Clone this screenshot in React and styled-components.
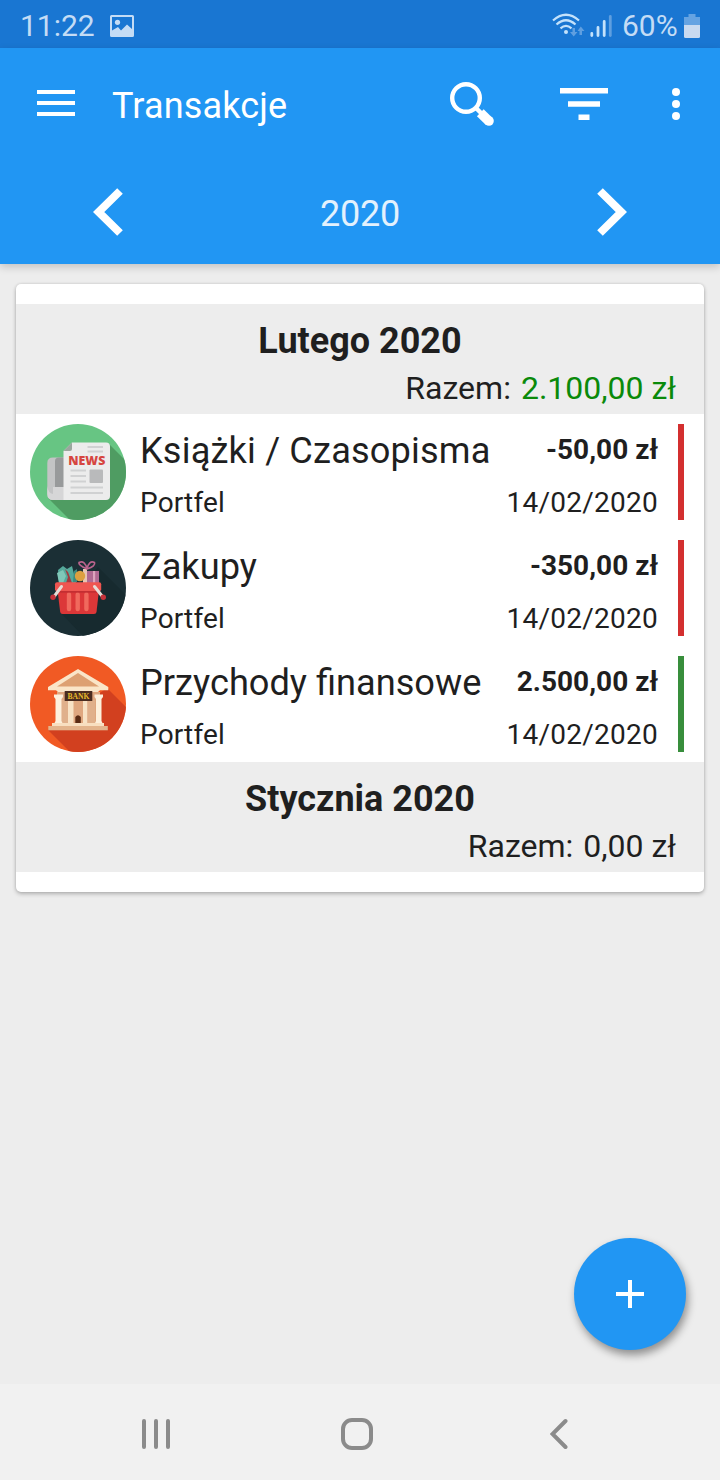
import React from 'react';
import styled, { createGlobalStyle } from 'styled-components';

const GlobalStyle = createGlobalStyle`
  * {
    box-sizing: border-box;
  }
  body {
    margin: 0;
    background: #ededed;
    font-family: Roboto, "Liberation Sans", sans-serif;
    color: #1f1f1f;
  }
  svg {
    display: block;
    flex: none;
  }
`;

const Screen = styled.div`
  width: 720px;
  height: 1480px;
  display: flex;
  flex-direction: column;
  background: #ededed;
  overflow: hidden;
`;

const StatusBar = styled.div`
  height: 48px;
  flex: none;
  padding: 3px 20px 0 20px;
  display: flex;
  align-items: center;
  background: #1976d2;
  color: #c4dcf5;
  font-size: 30px;
`;

const Clock = styled.span`
  width: 90px;
`;

const StatusIcons = styled.div`
  margin-left: auto;
  display: flex;
  align-items: center;
`;

const Percent = styled.span`
  width: 62px;
  white-space: nowrap;
`;

const Header = styled.header`
  height: 216px;
  flex: none;
  background: #2196f3;
  color: #fff;
  box-shadow: 0 3px 8px rgba(0, 0, 0, 0.18);
`;

const Toolbar = styled.div`
  height: 112px;
  display: flex;
  align-items: center;
  padding: 0 40px 0 37px;
`;

const MenuIcon = styled.svg`
  margin-bottom: 2px;
`;

const ActionIcon = styled.svg`
  margin-left: 64px;
`;

const Title = styled.h1`
  flex: 1;
  margin: 3px 0 0 37px;
  font-size: 36px;
  font-weight: 400;
  line-height: 42px;
  letter-spacing: 0.15px;
`;

const YearBar = styled.div`
  height: 104px;
  display: flex;
  align-items: center;
  justify-content: space-between;
  padding: 0 93px;
`;

const Year = styled.span`
  font-size: 36px;
  line-height: 42px;
  margin-top: 3px;
  letter-spacing: -0.2px;
  color: #e3f1fd;
`;

const Content = styled.main`
  flex: 1;
  padding: 20px 16px;
`;

const Card = styled.section`
  padding: 20px 0;
  background: #fff;
  border-radius: 5px;
  box-shadow: 0 2px 4px rgba(0, 0, 0, 0.24), 0 0 3px rgba(0, 0, 0, 0.12);
`;

const MonthHeader = styled.div`
  height: 110px;
  padding: 16px 28px 0;
  background: #ededed;
`;

const Month = styled.h2`
  margin: 0;
  font-size: 36px;
  font-weight: 700;
  line-height: 42px;
  text-align: center;
`;

const Total = styled.div`
  display: flex;
  justify-content: flex-end;
  gap: 10px;
  margin-top: 7px;
  font-size: 32px;
  line-height: 38px;
`;

const TotalValue = styled.span`
  color: ${({ $positive }) => ($positive ? '#0a8a0a' : 'inherit')};
`;

const Row = styled.div`
  height: 116px;
  display: flex;
  align-items: center;
  padding: 10px 20px 10px 14px;
`;

const Details = styled.div`
  flex: 1;
  height: 96px;
  margin: 0 20px 0 14px;
`;

const Line = styled.div`
  display: flex;
  justify-content: space-between;
  align-items: center;
  white-space: nowrap;
`;

const Name = styled.span`
  font-size: 36.2px;
  line-height: 54px;
  letter-spacing: ${({ $wide }) => ($wide ? '0.15px' : 'normal')};
`;

const Amount = styled.span`
  font-size: 28px;
  font-weight: 700;
  line-height: 50px;
  margin-bottom: 2px;
`;

const Small = styled.span`
  font-size: 28px;
  line-height: 50px;
  letter-spacing: 0.15px;
`;

const DateText = styled(Small)`
  letter-spacing: 0.25px;
`;

const Stripe = styled.div`
  width: 6px;
  height: 96px;
  background: ${({ $income }) => ($income ? '#388e3c' : '#d32f2f')};
`;

const AddButton = styled.button`
  position: absolute;
  left: 574px;
  top: 1238px;
  width: 112px;
  height: 112px;
  padding: 0;
  display: flex;
  align-items: center;
  justify-content: center;
  border: none;
  border-radius: 50%;
  background: #2196f3;
  box-shadow: 2px 5px 9px rgba(0, 0, 0, 0.4);
`;

const NavBar = styled.nav`
  height: 96px;
  flex: none;
  padding: 4px 152px 0 141px;
  display: flex;
  align-items: center;
  background: #f1f1f1;
`;

const HomeIcon = styled.svg`
  margin-left: 170px;
  margin-right: auto;
`;

const NewsIcon = () => (
  <svg width="96" height="96" viewBox="0 0 96 96">
    <defs>
      <clipPath id="news"><circle cx="48" cy="48" r="48" /></clipPath>
    </defs>
    <g clipPath="url(#news)">
      <rect width="96" height="96" fill="#67c583" />
      <path d="M79 20 L116 57 V116 H60 L18 74 Z" fill="#4f9c62" />
    </g>
    <path d="M17.3 39 Q17.3 33.5 23 33.5 H36 V76 H22 Q17.3 75 17.3 70 Z" fill="#c3c4c5" />
    <path d="M25 37 Q25 33.5 29 33.5 H36 V63 H25 Z" fill="#989a9b" />
    <path d="M17.3 62 V70 Q17.3 76 23 76 H36 V63 H23 V70 Q18 69 17.3 62 Z" fill="#d6d6d7" />
    <path d="M42 18.5 H76 Q80 18.5 80 22.5 V72 Q80 76 76 76 H33.5 V27 Z" fill="#ececec" />
    <path d="M42 18.5 V25 Q42 27 40 27 H33.5 Z" fill="#9aa79e" />
    <path d="M57.5 23 H73 M57.5 27.5 H73 M40.5 46.5 H56 M40.5 52 H56 M40.5 57.5 H56 M40.5 63.5 H73 M40.5 69 H73" stroke="#d0d1d2" strokeWidth="1.8" />
    <rect x="59.5" y="45.5" width="13.5" height="13.5" rx="1" fill="#b9babb" />
    <text x="38.3" y="40.6" textLength="37" lengthAdjust="spacingAndGlyphs" fontFamily="Open Sans, sans-serif" fontSize="11.8" fontWeight="800" fill="#d64540">NEWS</text>
  </svg>
);

const BasketIcon = () => (
  <svg width="96" height="96" viewBox="0 0 96 96">
    <defs>
      <clipPath id="basket"><circle cx="48" cy="48" r="48" /></clipPath>
    </defs>
    <g clipPath="url(#basket)">
      <rect width="96" height="96" fill="#1b2f35" />
      <path d="M68 27 L110 69 V116 H72 L30 72 Z" fill="#172a2f" />
    </g>
    <path d="M28 30 L33 26 L37 29 L42 26 L44 34 L46 43 H29 Z" fill="#55a99b" />
    <path d="M27 33 L33 30 L36 36 L33 43 H29 Z" fill="#7fc7b8" />
    <path d="M35 29 L38 32 L42 43 H36 L38 37 Z" fill="#a3393f" />
    <path d="M44 31 L47 29 V42 H43 Z" fill="#3c897f" />
    <rect x="53" y="31" width="16" height="12" fill="#b06a93" />
    <rect x="53" y="29" width="4" height="14" fill="#e8c6b3" />
    <rect x="63" y="31" width="2.2" height="12" fill="#dca4bd" />
    <path d="M57 29 Q48 25 49 22.5 Q55 20 57 29 Q59 20 64.5 22.5 Q66 26 57 29 Z" fill="none" stroke="#b9638c" strokeWidth="1.7" />
    <circle cx="50" cy="36" r="5.2" fill="#dda03f" />
    <path d="M27.5 50 H69 L66.5 72 Q66.2 74 64 74 H32.5 Q30.5 74 30.2 72 Z" fill="#dc3738" />
    <path d="M39 54.5 V69 M47.7 54.5 V69 M56.4 54.5 V69" stroke="#f0695d" strokeWidth="4.4" strokeLinecap="round" />
    <rect x="25" y="42.3" width="46.2" height="9" rx="2" fill="#ef5550" />
    <path d="M28 51.3 H68.5 V52.5 H28 Z" fill="#b92b2f" />
    <path d="M31.5 46.5 L24.5 56 M64.5 46.5 L72 56" stroke="#e7dcd6" strokeWidth="3" strokeLinecap="round" />
    <circle cx="23" cy="57.3" r="2.7" fill="#c6323a" />
    <circle cx="73.3" cy="57.3" r="2.7" fill="#c6323a" />
  </svg>
);

const BankIcon = () => (
  <svg width="96" height="96" viewBox="0 0 96 96">
    <defs>
      <clipPath id="bank"><circle cx="48" cy="48" r="48" /></clipPath>
    </defs>
    <g clipPath="url(#bank)">
      <rect width="96" height="96" fill="#f15a24" />
      <path d="M77 32 L116 71 V116 H60 L18 74 Z" fill="#d2401f" />
    </g>
    <rect x="27" y="36" width="43" height="34" fill="#dfa77f" />
    <path d="M38 44 H43.5 V68 H38 Z M53 44 H57.5 V68 H53 Z" fill="#f8e3c6" />
    <path d="M31.5 44 H38 V68 H31.5 Z M57.5 44 H65 V68 H57.5 Z" fill="#e0b08b" />
    <path d="M48 13 L78.3 31 V34.2 H70 L68 36 H28 L26 34.2 H18 V31 Z" fill="#fae5c8" />
    <path d="M48 17 L69 30.5 H27 Z" fill="#dda072" />
    <path d="M24 38.5 H33 V41 L31.5 43 V65 L33 68 H24 L25.5 65 V43 L24 41 Z" fill="#fdf0dc" />
    <path d="M64.5 38.5 H73 V41 L71.5 43 V65 L73 68 H64.5 L66 65 V43 L64.5 41 Z" fill="#fdf0dc" />
    <rect x="22" y="67" width="52" height="3.5" fill="#f8dfc0" />
    <rect x="18.3" y="70" width="59.5" height="4.3" fill="#e3b48c" />
    <path d="M45.3 67 V61 Q48 57.5 50.8 61 V67 Z" fill="#5a2b13" />
    <rect x="34.7" y="35" width="27.6" height="10" fill="#4a2c20" />
    <text x="37.5" y="42.8" textLength="22" lengthAdjust="spacingAndGlyphs" fontFamily="Liberation Serif, serif" fontSize="8.5" fontWeight="700" fill="#e8ba2c">BANK</text>
  </svg>
);

const months = [
  {
    name: 'Lutego 2020',
    total: '2.100,00 zł',
    positive: true,
    items: [
      { icon: NewsIcon, name: 'Książki / Czasopisma', amount: '-50,00 zł', wide: true },
      { icon: BasketIcon, name: 'Zakupy', amount: '-350,00 zł' },
      { icon: BankIcon, name: 'Przychody finansowe', amount: '2.500,00 zł', income: true },
    ],
  },
  { name: 'Stycznia 2020', total: '0,00 zł', items: [] },
];

const Transaction = ({ item }) => {
  const Icon = item.icon;
  return (
    <Row>
      <Icon />
      <Details>
        <Line>
          <Name $wide={item.wide}>{item.name}</Name>
          <Amount>{item.amount}</Amount>
        </Line>
        <Line>
          <Small>Portfel</Small>
          <DateText>14/02/2020</DateText>
        </Line>
      </Details>
      <Stripe $income={item.income} />
    </Row>
  );
};

const Status = () => (
  <StatusBar>
    <Clock>11:22</Clock>
    <svg width="24" height="22" viewBox="0 0 24 22">
      <path fillRule="evenodd" fill="#c4dcf5" d="M1.5 0 H22.5 Q24 0 24 1.5 V20.5 Q24 22 22.5 22 H1.5 Q0 22 0 20.5 V1.5 Q0 0 1.5 0 Z M2 2 V15.5 L8 12 L11 15.5 L17 9.5 L22 14 V2 Z" />
      <circle cx="7.5" cy="7.3" r="2.6" fill="#c4dcf5" />
    </svg>
    <StatusIcons>
      <svg width="70" height="26" viewBox="0 0 70 26">
        <g fill="none" stroke="#c4e2fb" strokeWidth="2.2">
          <path d="M1 7.5 Q14 -4 27 7.5" />
          <path d="M4.5 11.5 Q14 3 23.5 11.5" />
          <path d="M8.5 15.3 Q14 10.5 19.5 15.3" />
        </g>
        <circle cx="14" cy="19" r="2" fill="#c4e2fb" />
        <g fill="#5f9fe0">
          <path d="M20.5 15 H23 V19 H25.5 L21.7 23.5 L18 19 H20.5 Z" />
          <path d="M27.5 22 H30 V18 H32.5 L28.8 13.5 L25.5 18 H27.5 Z" />
        </g>
        <g strokeWidth="2.8" strokeLinecap="round" stroke="#c4e2fb">
          <path d="M39.8 20.5 V22.5 M46 14.5 V22.5 M52.2 8.5 V22.5" />
          <path d="M58.3 3.5 V22.5" stroke="#5f9fe0" />
        </g>
      </svg>
      <Percent>60%</Percent>
      <svg width="16" height="24" viewBox="0 0 16 24">
        <path d="M4.5 0 H11.5 V3 H16 V12 H0 V3 H4.5 Z" fill="#65a3e2" />
        <path d="M0 11 H16 V22.5 Q16 24 14.5 24 H1.5 Q0 24 0 22.5 Z" fill="#c9daf0" />
      </svg>
    </StatusIcons>
  </StatusBar>
);

const App = () => (
  <Screen>
    <GlobalStyle />
    <Status />
    <Header>
      <Toolbar>
        <MenuIcon width="38" height="28" viewBox="0 0 38 28">
          <path d="M0 3 H38 M0 14 H38 M0 25 H38" stroke="#fff" strokeWidth="4" />
        </MenuIcon>
        <Title>Transakcje</Title>
        <svg width="46" height="46" viewBox="0 0 46 46">
          <circle cx="16" cy="17" r="13.8" fill="none" stroke="#fff" strokeWidth="4.4" />
          <path d="M25 26 L32 33" stroke="#fff" strokeWidth="4.4" />
          <path d="M30.3 31.8 L39 40.3" stroke="#fff" strokeWidth="9.6" />
          <circle cx="39" cy="40" r="4.8" fill="#fff" />
        </svg>
        <ActionIcon width="48" height="32" viewBox="0 0 48 32">
          <path d="M0 2.7 H48 M8 16 H40 M18.5 29.3 H29.5" stroke="#fff" strokeWidth="5.4" />
        </ActionIcon>
        <ActionIcon width="8" height="32" viewBox="0 0 8 32">
          <g fill="#fff">
            <circle cx="4" cy="4" r="4" />
            <circle cx="4" cy="16" r="4" />
            <circle cx="4" cy="28" r="4" />
          </g>
        </ActionIcon>
      </Toolbar>
      <YearBar>
        <svg width="30" height="48" viewBox="0 0 30 48">
          <path d="M27 3 L5.7 24 L27 45" fill="none" stroke="#fff" strokeWidth="8" />
        </svg>
        <Year>2020</Year>
        <svg width="30" height="48" viewBox="0 0 30 48">
          <path d="M3 3 L24.3 24 L3 45" fill="none" stroke="#fff" strokeWidth="8" />
        </svg>
      </YearBar>
    </Header>
    <Content>
      <Card>
        {months.map((month) => (
          <React.Fragment key={month.name}>
            <MonthHeader>
              <Month>{month.name}</Month>
              <Total>
                <span>Razem:</span>
                <TotalValue $positive={month.positive}>{month.total}</TotalValue>
              </Total>
            </MonthHeader>
            {month.items.map((item) => (
              <Transaction item={item} key={item.name} />
            ))}
          </React.Fragment>
        ))}
      </Card>
    </Content>
    <AddButton aria-label="Dodaj">
      <svg width="28" height="28" viewBox="0 0 28 28">
        <path d="M14 0 V28 M0 14 H28" stroke="#fff" strokeWidth="4" />
      </svg>
    </AddButton>
    <NavBar>
      <svg width="30" height="32" viewBox="0 0 30 32">
        <path d="M3 3 V29 M15 3 V29 M27 3 V29" stroke="#8b8b8b" strokeWidth="4" strokeLinecap="round" />
      </svg>
      <HomeIcon width="32" height="32" viewBox="0 0 32 32">
        <rect x="2" y="2" width="28" height="28" rx="9" fill="none" stroke="#8b8b8b" strokeWidth="4" />
      </HomeIcon>
      <svg width="18" height="32" viewBox="0 0 18 32">
        <path d="M15.5 3 L2.5 16 L15.5 29" fill="none" stroke="#8b8b8b" strokeWidth="4" strokeLinecap="round" />
      </svg>
    </NavBar>
  </Screen>
);

export default App;
